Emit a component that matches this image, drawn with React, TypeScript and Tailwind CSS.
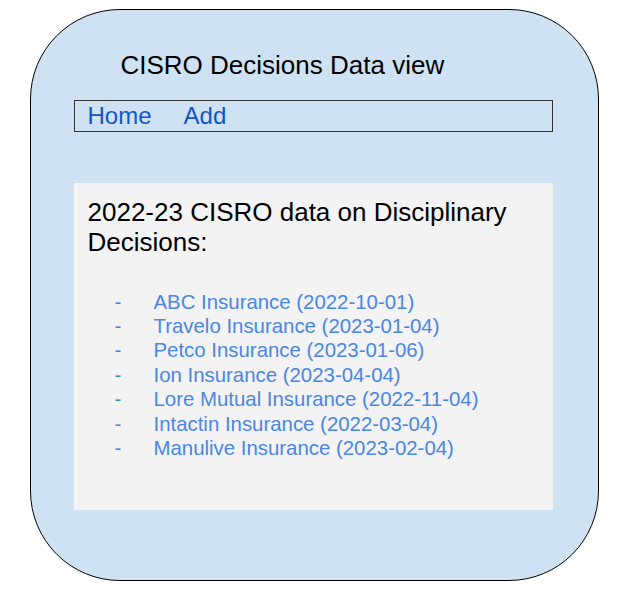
import React from "react";

const items = [
  "ABC Insurance (2022-10-01)",
  "Travelo Insurance (2023-01-04)",
  "Petco Insurance (2023-01-06)",
  "Ion Insurance (2023-04-04)",
  "Lore Mutual Insurance (2022-11-04)",
  "Intactin Insurance (2022-03-04)",
  "Manulive Insurance (2023-02-04)",
];

export default function App() {
  return (
    <div className="w-[622px] h-[594px] bg-white pt-[9px] pl-[30px]" style={{ fontFamily: '"Liberation Sans", Arial, sans-serif' }}>
      <div className="box-border w-[569px] h-[572px] rounded-[90px] border-[1.5px] border-black bg-[#cfe2f3] pt-[39.5px] pl-[42.5px] flex flex-col">
        <div className="ml-[47px] text-[26px] leading-[30px] text-black whitespace-nowrap">CISRO Decisions Data view</div>
        <div className="box-border mt-[20px] w-[479px] h-[32px] border border-[#333333] pl-[13px] flex gap-[32px] text-[24px] leading-[30px] text-[#1155cc]">
          <span>Home</span>
          <span>Add</span>
        </div>
        <div className="box-border mt-[51px] w-[479px] h-[327px] bg-[#f3f3f3] px-[14px] pt-[14px]">
          <div className="text-[26px] leading-[30px] text-black">2022-23 CISRO data on Disciplinary Decisions:</div>
          <ul className="mt-[33px] text-[20.4px] leading-[24.48px] text-[#4a86e8]">
            {items.map((t) => (
              <li key={t} className="flex pl-[27px] whitespace-nowrap">
                <span className="w-[39px] shrink-0">-</span>
                <span>{t}</span>
              </li>
            ))}
          </ul>
        </div>
      </div>
    </div>
  );
}
